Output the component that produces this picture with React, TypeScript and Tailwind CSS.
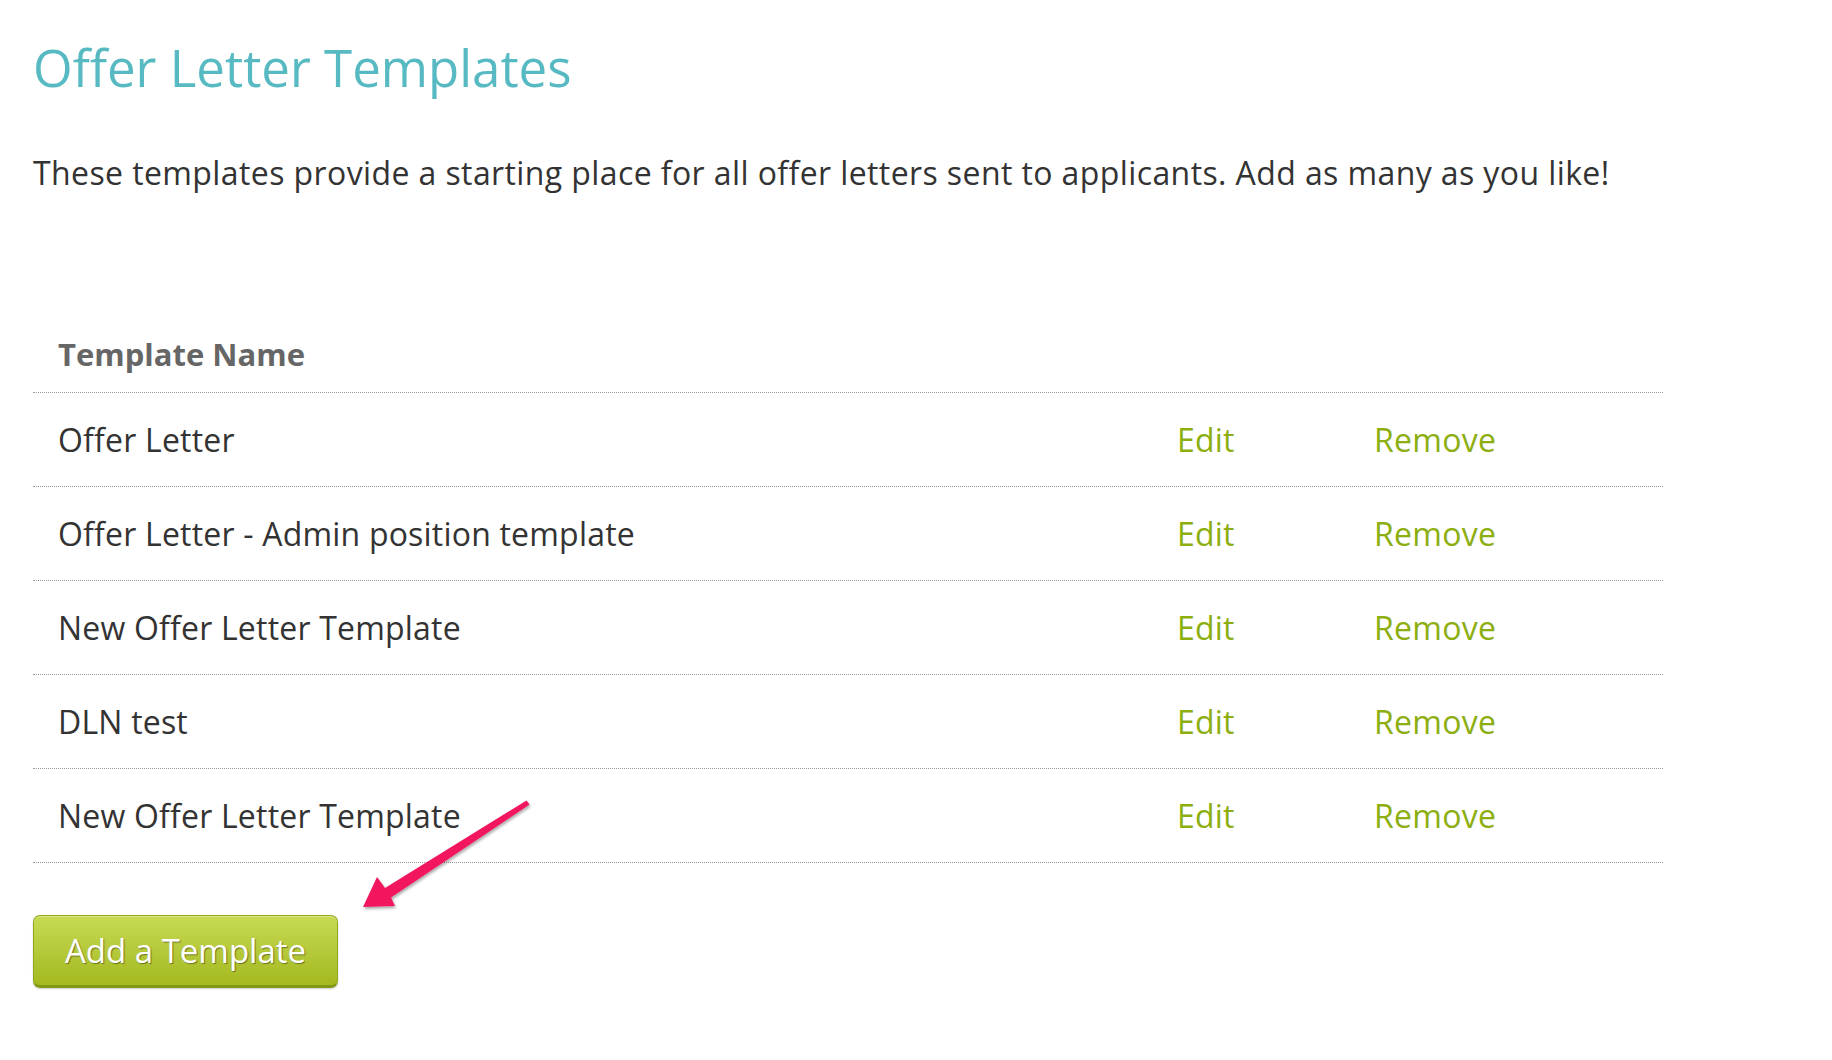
import React from "react";

const rows = [
  "Offer Letter",
  "Offer Letter - Admin position template",
  "New Offer Letter Template",
  "DLN test",
  "New Offer Letter Template",
];

export default function App() {
  return (
    <div className="relative w-[1832px] h-[1060px] bg-white pl-[33px] pt-[37px] font-['Open_Sans',sans-serif] overflow-hidden">
      <h1 className="text-[51px] leading-[60px] text-[#57bac3] font-normal">Offer Letter Templates</h1>
      <p className="mt-[58px] text-[32px] leading-[36px] tracking-[0.4px] text-[#333333]">
        These templates provide a starting place for all offer letters sent to applicants. Add as many as you like!
      </p>
      <div className="mt-[108px] w-[1630px]">
        <div className="grid grid-cols-[1121px_196px_313px] h-[94px] items-end pb-[20px] border-b border-dotted border-[#999999]">
          <div className="pl-[25px] text-[31px] leading-[36px] font-bold text-[#666666]">Template Name</div>
          <div></div>
          <div></div>
        </div>
        {rows.map((r, i) => (
          <div
            key={i}
            className="grid grid-cols-[1121px_196px_313px] h-[94px] items-center border-b border-dotted border-[#999999]"
          >
            <div className="pl-[25px] text-[32px] leading-[36px] tracking-[0.2px] text-[#333333]">{r}</div>
            <div className="pl-[23px] text-[32px] leading-[36px] tracking-[0.2px] text-[#8cae10]">Edit</div>
            <div className="pl-[24px] text-[32px] leading-[36px] tracking-[0.3px] text-[#8cae10]">Remove</div>
          </div>
        ))}
      </div>
      <button className="mt-[52px] w-[305px] h-[73px] flex items-center justify-center rounded-[7px] border border-[#91a81b] border-b-[3px] border-b-[#829716] bg-gradient-to-b from-[#c8da52] to-[#a4b91c] text-white text-[33px] leading-[36px] font-normal [text-shadow:1px_1px_1px_rgba(0,0,0,0.4)] shadow-[inset_0_1px_0_rgba(255,255,255,0.35),0_1px_2px_rgba(0,0,0,0.2)]">
        Add a Template
      </button>
      <svg
        className="absolute left-0 top-0 pointer-events-none"
        width="1832"
        height="1060"
        viewBox="0 0 1832 1060"
      >
        <defs>
          <filter id="sh" x="-20%" y="-20%" width="140%" height="140%">
            <feDropShadow dx="1" dy="2" stdDeviation="1.5" floodColor="#000" floodOpacity="0.35" />
          </filter>
        </defs>
        <polygon
          points="529.5,804.5 391,897.5 395,906 363,907 377,877 385,888 526.5,800.5"
          fill="#f2175e"
          filter="url(#sh)"
        />
      </svg>
    </div>
  );
}
